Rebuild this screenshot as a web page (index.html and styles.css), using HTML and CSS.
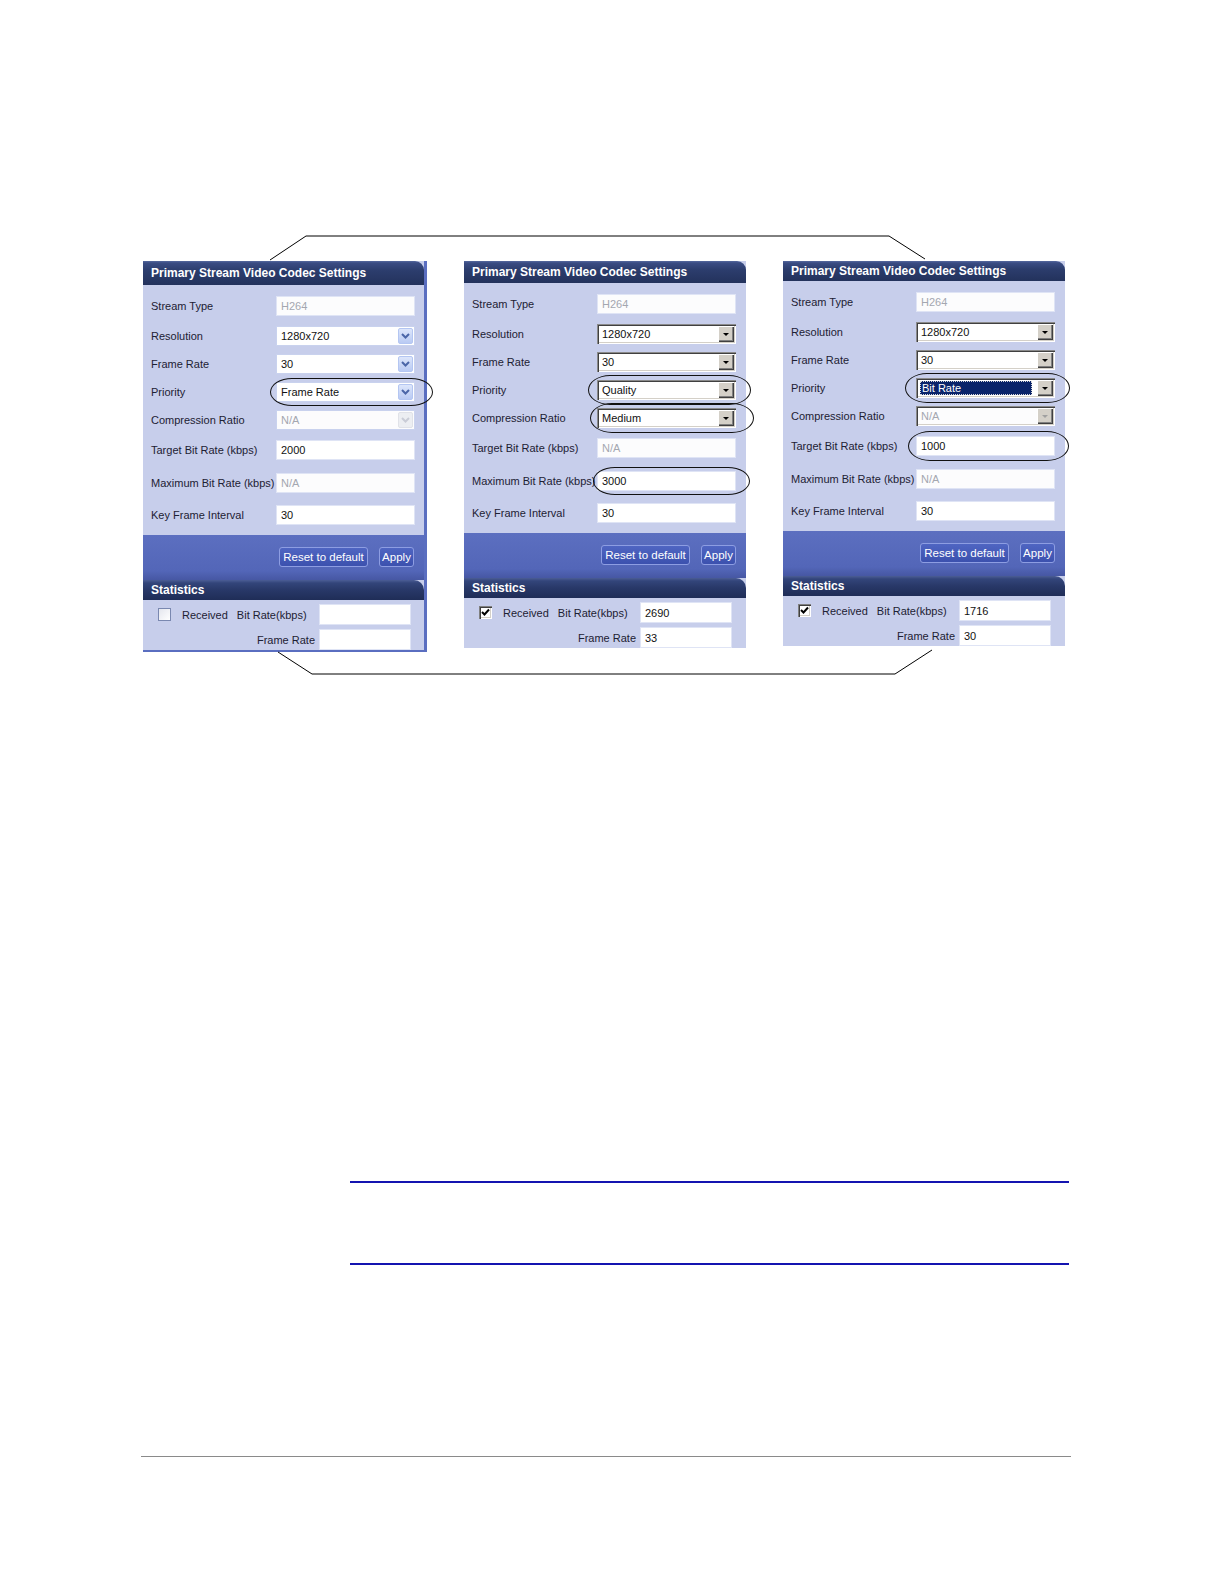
FILE: index.html
```html
<!DOCTYPE html>
<html>
<head>
<meta charset="utf-8">
<link rel="stylesheet" href="styles.css">
</head>
<body>
<div class="figure">
  <section class="panel panel-xp">
    <div class="ph ph-a">Primary Stream Video Codec Settings</div>
    <div class="pbody">
      <div class="row"><span class="lbl">Stream Type</span><span class="fld dis">H264</span></div>
      <div class="row g10"><span class="lbl">Resolution</span><span class="fld sel-xp">1280x720<span class="arr"><svg width="11" height="8" viewBox="0 0 11 8"><path d="M2 2 L5.5 5.5 L9 2" fill="none" stroke="#4b66a8" stroke-width="2"/></svg></span></span></div>
      <div class="row"><span class="lbl">Frame Rate</span><span class="fld sel-xp">30<span class="arr"><svg width="11" height="8" viewBox="0 0 11 8"><path d="M2 2 L5.5 5.5 L9 2" fill="none" stroke="#4b66a8" stroke-width="2"/></svg></span></span></div>
      <div class="row"><span class="lbl">Priority</span><span class="fld sel-xp circ c-a">Frame Rate<span class="arr"><svg width="11" height="8" viewBox="0 0 11 8"><path d="M2 2 L5.5 5.5 L9 2" fill="none" stroke="#4b66a8" stroke-width="2"/></svg></span></span></div>
      <div class="row"><span class="lbl">Compression Ratio</span><span class="fld sel-xp dis xpdis">N/A<span class="arr"><svg width="11" height="8" viewBox="0 0 11 8"><path d="M2 2 L5.5 5.5 L9 2" fill="none" stroke="#c9ccd6" stroke-width="2"/></svg></span></span></div>
      <div class="row g10"><span class="lbl">Target Bit Rate (kbps)</span><span class="fld">2000</span></div>
      <div class="row g13"><span class="lbl">Maximum Bit Rate (kbps)</span><span class="fld dis">N/A</span></div>
      <div class="row g12"><span class="lbl">Key Frame Interval</span><span class="fld">30</span></div>
    </div>
    <div class="band"><span class="btn b-reset">Reset to default</span><span class="btn b-apply">Apply</span></div>
    <div class="sh">Statistics</div>
    <div class="stats">
      <div class="srow"><span class="sl"><span class="chk chk-xp"></span><span class="rec">Received</span><span class="br">Bit Rate(kbps)</span></span><span class="fld sfld"></span></div>
      <div class="srow"><span class="sl sl-r">Frame Rate</span><span class="fld sfld"></span></div>
    </div>
  </section>

  <section class="panel">
    <div class="ph">Primary Stream Video Codec Settings</div>
    <div class="pbody">
      <div class="row"><span class="lbl">Stream Type</span><span class="fld dis">H264</span></div>
      <div class="row g10"><span class="lbl">Resolution</span><span class="fld sel-cl">1280x720<span class="carr"></span></span></div>
      <div class="row"><span class="lbl">Frame Rate</span><span class="fld sel-cl">30<span class="carr"></span></span></div>
      <div class="row"><span class="lbl">Priority</span><span class="fld sel-cl circ c-b">Quality<span class="carr"></span></span></div>
      <div class="row"><span class="lbl">Compression Ratio</span><span class="fld sel-cl circ c-c">Medium<span class="carr"></span></span></div>
      <div class="row g10"><span class="lbl">Target Bit Rate (kbps)</span><span class="fld dis">N/A</span></div>
      <div class="row g13"><span class="lbl">Maximum Bit Rate (kbps)</span><span class="fld circ c-d">3000</span></div>
      <div class="row g12"><span class="lbl">Key Frame Interval</span><span class="fld">30</span></div>
    </div>
    <div class="band"><span class="btn b-reset">Reset to default</span><span class="btn b-apply">Apply</span></div>
    <div class="sh">Statistics</div>
    <div class="stats">
      <div class="srow"><span class="sl"><span class="chk chk-cl"><svg width="9" height="9" viewBox="0 0 9 9"><path d="M1 4 L3.5 6.5 L8 1.5" fill="none" stroke="#000" stroke-width="2"/></svg></span><span class="rec">Received</span><span class="br">Bit Rate(kbps)</span></span><span class="fld sfld">2690</span></div>
      <div class="srow"><span class="sl sl-r">Frame Rate</span><span class="fld sfld">33</span></div>
    </div>
  </section>

  <section class="panel">
    <div class="ph ph-c">Primary Stream Video Codec Settings</div>
    <div class="pbody">
      <div class="row"><span class="lbl">Stream Type</span><span class="fld dis">H264</span></div>
      <div class="row g10"><span class="lbl">Resolution</span><span class="fld sel-cl">1280x720<span class="carr"></span></span></div>
      <div class="row"><span class="lbl">Frame Rate</span><span class="fld sel-cl">30<span class="carr"></span></span></div>
      <div class="row"><span class="lbl">Priority</span><span class="fld sel-cl circ c-e"><span class="hl">Bit Rate</span><span class="carr"></span></span></div>
      <div class="row"><span class="lbl">Compression Ratio</span><span class="fld sel-cl dis cldis">N/A<span class="carr"></span></span></div>
      <div class="row g10"><span class="lbl">Target Bit Rate (kbps)</span><span class="fld circ c-f">1000</span></div>
      <div class="row g13"><span class="lbl">Maximum Bit Rate (kbps)</span><span class="fld dis">N/A</span></div>
      <div class="row g12"><span class="lbl">Key Frame Interval</span><span class="fld">30</span></div>
    </div>
    <div class="band"><span class="btn b-reset">Reset to default</span><span class="btn b-apply">Apply</span></div>
    <div class="sh">Statistics</div>
    <div class="stats">
      <div class="srow"><span class="sl"><span class="chk chk-cl"><svg width="9" height="9" viewBox="0 0 9 9"><path d="M1 4 L3.5 6.5 L8 1.5" fill="none" stroke="#000" stroke-width="2"/></svg></span><span class="rec">Received</span><span class="br">Bit Rate(kbps)</span></span><span class="fld sfld">1716</span></div>
      <div class="srow"><span class="sl sl-r">Frame Rate</span><span class="fld sfld">30</span></div>
    </div>
  </section>

  <svg class="links" width="1224" height="700" viewBox="0 0 1224 700">
    <polyline points="270,260 306,236 889,236 925,259" fill="none" stroke="#000" stroke-width="1"/>
    <polyline points="278,652 312,674 895,674 932,650" fill="none" stroke="#000" stroke-width="1"/>
  </svg>
</div>

<div class="note"></div>
<div class="foot"></div>
</body>
</html>
```

FILE: styles.css
```css
* { box-sizing: border-box; }

body {
  margin: 0;
  width: 1224px;
  height: 1584px;
  background: #fff;
  font-family: "Liberation Sans", Arial, sans-serif;
  overflow: hidden;
}

.figure {
  position: relative;
  display: flex;
  align-items: flex-start;
  gap: 37px;
  padding: 261px 0 0 143px;
}

.links {
  position: absolute;
  left: 0;
  top: 0;
  pointer-events: none;
}

.panel {
  width: 282px;
  background: #c7ceeb;
  color: #1d2133;
  font-size: 11px;
  position: relative;
}

.panel-xp {
  width: 284px;
  border-right: 3px solid #5a6ec0;
  border-bottom: 2px solid #5a6ec0;
}

.ph {
  height: 22px;
  background: linear-gradient(#56699f 0, #3a4c83 2px, #2c3d6d 40%, #23325c 100%);
  color: #fff;
  font-weight: bold;
  font-size: 12px;
  padding-left: 8px;
  display: flex;
  align-items: center;
  border-top-right-radius: 9px;
  white-space: nowrap;
}

.ph-a { height: 24px; }
.ph-c { height: 20px; }

.pbody {
  padding: 11px 0 10px 8px;
}

.row {
  display: flex;
  align-items: center;
  height: 20px;
}

.row + .row { margin-top: 8px; }
.row.g10 { margin-top: 10px; }
.row.g13 { margin-top: 13px; }
.row.g12 { margin-top: 12px; }

.lbl {
  width: 125px;
  white-space: nowrap;
}

.fld {
  width: 139px;
  height: 20px;
  position: relative;
  background: #fff;
  border: 1px solid #dfe4f5;
  display: flex;
  align-items: center;
  padding-left: 4px;
  font-size: 11px;
  color: #111;
  white-space: nowrap;
}

.fld.dis { color: #a4a7b0; background: #fcfcfd; }

/* XP style combo */
.sel-xp { border-color: #c9d2ee; }
.sel-xp .arr {
  position: absolute;
  right: 1px;
  top: 1px;
  width: 15px;
  height: 16px;
  background: linear-gradient(#dde6fb, #b9caf3);
  border: 1px solid #b4c6f2;
  border-radius: 2px;
  display: flex;
  align-items: center;
  justify-content: center;
}
.xpdis { background: #f4f3ee; }
.xpdis .arr { background: #eceef2; border-color: #e0e2e8; }

/* classic combo */
.sel-cl {
  border: none;
  padding-left: 5px;
  box-shadow: inset 1px 1px #8a8a8a, inset 2px 2px #404040, inset -1px -1px #ffffff, inset -2px -2px #d4d0c8;
}
.carr {
  position: absolute;
  right: 2px;
  top: 2px;
  width: 16px;
  height: 16px;
  background: #d4d0c8;
  box-shadow: inset 1px 1px #ffffff, inset -1px -1px #404040, inset -2px -2px #808080;
  display: flex;
  align-items: center;
  justify-content: center;
}
.carr::before {
  content: "";
  border-left: 3px solid transparent;
  border-right: 3px solid transparent;
  border-top: 3px solid #000;
  margin-top: 1px;
}
.cldis { background: #f7f7f7; }
.cldis .carr::before { border-top-color: #a0a0a0; }

.hl {
  height: 14px;
  width: 112px;
  margin-left: -1px;
  padding-left: 2px;
  background: #0a246a;
  color: #fff;
  outline: 1px dotted #d9d9d9;
  outline-offset: -1px;
  display: flex;
  align-items: center;
}

/* highlight ovals */
.circ::after {
  content: "";
  position: absolute;
  left: -8px;
  right: -16px;
  top: -5px;
  bottom: -5px;
  border: 1px solid #111;
  border-radius: 22px / 50%;
  pointer-events: none;
}
.c-a::after { left: -7px; right: -19px; }
.c-b::after { left: -9px; right: -15px; }
.c-c::after { left: -7px; right: -18px; }
.c-d::after { left: -5px; right: -15px; }
.c-e::after { left: -11px; right: -15px; }
.c-f::after { left: -9px; right: -15px; top: -6px; bottom: -6px; }

.band {
  height: 45px;
  padding: 12px 10px 0 0;
  display: flex;
  justify-content: flex-end;
  align-items: flex-start;
  gap: 11px;
  background: linear-gradient(#5c6fc0 0, #5366b8 80%, #4657a3 100%);
}

.btn {
  height: 20px;
  border: 1px solid #8d9de2;
  border-radius: 3px;
  background: linear-gradient(#4f65c2, #3c51ae);
  color: #fff;
  font-size: 11.5px;
  display: flex;
  align-items: center;
  justify-content: center;
  white-space: nowrap;
}
.b-reset { width: 89px; }
.b-apply { width: 35px; }

.sh {
  height: 20px;
  background: linear-gradient(#4b5d95 0, #33457a 3px, #283868 50%, #1f2d57 100%);
  border-top-right-radius: 10px;
  color: #fff;
  font-weight: bold;
  font-size: 12px;
  padding-left: 8px;
  display: flex;
  align-items: center;
}

.stats {
  padding: 4px 0 0 0;
}

.srow {
  display: flex;
  align-items: center;
  height: 21px;
}
.srow + .srow { margin-top: 4px; }

.sl {
  width: 176px;
  display: flex;
  align-items: center;
  padding-left: 15px;
  white-space: nowrap;
}
.sl-r {
  justify-content: flex-end;
  padding-right: 4px;
}

.rec { margin-left: 11px; }
.br { margin-left: 9px; }

.sfld {
  width: 92px;
  height: 21px;
}

.chk {
  width: 13px;
  height: 13px;
  display: flex;
  align-items: center;
  justify-content: center;
  flex: none;
}
.chk-xp {
  border: 1px solid #7a88b0;
  background: linear-gradient(135deg, #e4e6ee, #ffffff);
}
.chk-cl {
  background: #fff;
  box-shadow: inset 1px 1px #808080, inset 2px 2px #404040, inset -1px -1px #ffffff, inset -2px -2px #d4d0c8;
}

.note {
  margin: 529px 0 0 350px;
  width: 719px;
  height: 84px;
  border-top: 2px solid #1414b0;
  border-bottom: 2px solid #1414b0;
}

.foot {
  margin: 191px 0 0 141px;
  width: 930px;
  border-top: 1px solid #8a8a8a;
}
```
